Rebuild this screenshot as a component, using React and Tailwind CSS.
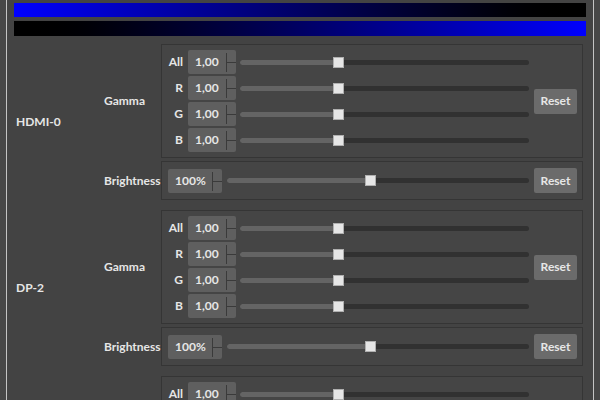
import React from "react";

function Spin({ value, wide }) {
  return (
    <div
      className={
        (wide ? "w-[54px]" : "w-[48px]") +
        " relative h-6 shrink-0 rounded-[2px] bg-[#5f5f5f] flex items-center"
      }
    >
      <span className="pl-[7px] text-[12px] font-bold text-[#e6e6e6] leading-none">{value}</span>
      <div className="absolute right-0 top-[3px] bottom-[2px] w-[10px] border-l border-[#3a3a3a] flex flex-col">
        <div className="flex-1 border-b border-[#3a3a3a]" />
        <div className="flex-1" />
      </div>
    </div>
  );
}

function Slider({ pos }) {
  return (
    <div className="relative flex-1 h-[11px] flex items-center">
      <div className="absolute left-0 right-0 h-[5px] rounded-full bg-[#313131]" />
      <div className="absolute left-0 h-[5px] rounded-l-full bg-[#646464]" style={{ width: pos }} />
      <div
        className="absolute top-0 w-[11px] h-[11px] bg-[#e6e6e6] border border-[#b0b0b0]"
        style={{ left: pos }}
      />
    </div>
  );
}

function Reset() {
  return (
    <div className="w-[43px] h-[25px] shrink-0 rounded-[2px] bg-[#6b6b6b] flex items-center justify-center text-[12px] font-bold text-[#e6e6e6]">
      Reset
    </div>
  );
}

function GammaFrame() {
  const rows = ["All", "R", "G", "B"];
  return (
    <div className="w-[422px] h-[114px] border border-[#353535] bg-[#454545] flex items-center pr-[5px]">
      <div className="flex-1 flex flex-col gap-[2px]">
        {rows.map((r) => (
          <div key={r} className="flex items-center h-6">
            <div className="w-[21px] text-right text-[12px] font-bold text-[#e6e6e6]">{r}</div>
            <div className="w-[5px]" />
            <Spin value="1,00" />
            <div className="w-[4px]" />
            <Slider pos={93} />
          </div>
        ))}
      </div>
      <div className="w-[5px]" />
      <Reset />
    </div>
  );
}

function BrightFrame() {
  return (
    <div className="w-[422px] h-[39px] border border-[#353535] bg-[#454545] flex items-center pl-[6px] pr-[5px]">
      <Spin value="100%" wide />
      <div className="w-[5px]" />
      <Slider pos={138} />
      <div className="w-[5px]" />
      <Reset />
    </div>
  );
}

function Display({ name }) {
  return (
    <div className="flex items-center">
      <div className="w-[88px] text-[12px] font-bold text-[#e6e6e6]">{name}</div>
      <div className="flex flex-col gap-[3px]">
        <div className="flex items-center">
          <div className="w-[57px] text-[12px] font-bold text-[#e6e6e6]">Gamma</div>
          <GammaFrame />
        </div>
        <div className="flex items-center">
          <div className="w-[57px] text-[12px] font-bold text-[#e6e6e6]">Brightness</div>
          <BrightFrame />
        </div>
      </div>
    </div>
  );
}

export default function App() {
  return (
    <div className="w-[600px] h-[400px] overflow-hidden bg-[#474747] flex pl-[6px] pr-[6px] font-[Lato,sans-serif]">
      <div className="flex-1 border-l border-r border-[#c4c4c4] bg-[#434343] flex flex-col pt-[3px]">
        <div className="flex flex-col gap-[4px] px-[7px]">
          <div className="h-[14px] bg-gradient-to-r from-[#0000ff] to-[#000000]" />
          <div className="h-[15px] bg-gradient-to-r from-[#000000] to-[#0000ff]" />
        </div>
        <div className="flex flex-col gap-[10px] pl-[9px] pt-[8px]">
          <Display name="HDMI-0" />
          <Display name="DP-2" />
          <Display name="DP-3" />
        </div>
      </div>
    </div>
  );
}
